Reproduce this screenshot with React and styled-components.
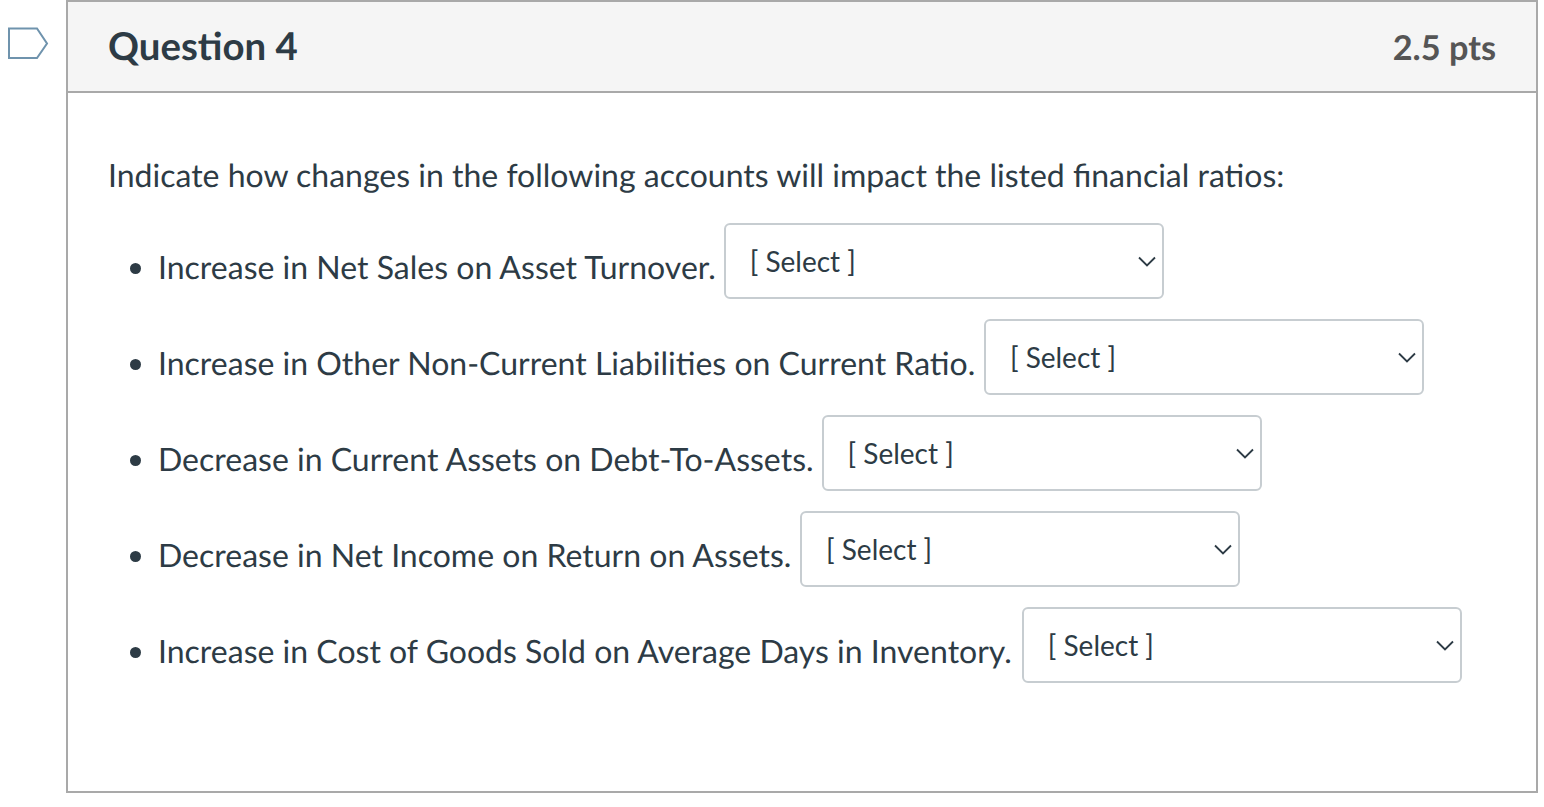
import React from 'react';
import styled, { createGlobalStyle } from 'styled-components';

const GlobalStyle = createGlobalStyle`
    html, body {
        margin: 0;
        padding: 0;
        background: #fff;
    }
    body {
        font-family: Lato, 'Open Sans', Arial, sans-serif;
        color: #2d3b45;
        text-rendering: geometricPrecision;
    }
`;

const Page = styled.div`
    display: flex;
    align-items: flex-start;
    width: 1544px;
    height: 807px;
    overflow: hidden;
`;

const FlagColumn = styled.div`
    width: 66px;
    flex: none;
    padding: 27px 0 0 7px;
    box-sizing: border-box;
`;

const Card = styled.section`
    width: 1472px;
    height: 793px;
    box-sizing: border-box;
    border: 2px solid #a9a9a9;
    display: flex;
    flex-direction: column;
`;

const CardHeader = styled.header`
    height: 91px;
    box-sizing: border-box;
    flex: none;
    background: #f5f5f5;
    border-bottom: 2px solid #a9a9a9;
    display: flex;
    align-items: center;
    justify-content: space-between;
    padding: 0 40px 2px;
`;

const Title = styled.h2`
    margin: 0;
    font-size: 38.4px;
    font-weight: 700;
    color: #2d3b45;
`;

const Points = styled.div`
    font-size: 34.3px;
    font-weight: 700;
    color: #555;
    padding-top: 4px;
`;

const CardBody = styled.div`
    padding: 59px 40px 0;
`;

const Intro = styled.p`
    margin: 0 0 25px;
    font-size: 32px;
    line-height: 46px;
`;

const List = styled.ul`
    margin: 0;
    padding: 0 0 0 50px;
`;

const Item = styled.li`
    font-size: 32px;
    line-height: 40px;
    white-space: nowrap;
`;

const SelectBox = styled.span`
    position: relative;
    display: inline-block;
    width: 440px;
    height: 76px;
    margin: 0 0 20px ${(props) => props.$gap}px;
    vertical-align: middle;
`;

const NativeSelect = styled.select`
    appearance: none;
    width: 100%;
    height: 100%;
    box-sizing: border-box;
    display: block;
    background: #fff;
    border: 2px solid #c7cdd1;
    border-radius: 6px;
    padding: 0 24px;
    font-family: Lato, 'Open Sans', Arial, sans-serif;
    font-size: 28px;
    color: #2d3b45;
`;

const Chevron = styled.svg`
    position: absolute;
    right: 8px;
    top: 33px;
    width: 18px;
    height: 12px;
    pointer-events: none;
`;

const rows = [
    { text: 'Increase in Net Sales on Asset Turnover.', gap: 8 },
    { text: 'Increase in Other Non-Current Liabilities on Current Ratio.', gap: 8.6 },
    { text: 'Decrease in Current Assets on Debt-To-Assets.', gap: 8 },
    { text: 'Decrease in Net Income on Return on Assets.', gap: 8.6 },
    { text: 'Increase in Cost of Goods Sold on Average Days in Inventory.', gap: 10 },
];

export default function App() {
    return (
        <Page>
            <GlobalStyle />
            <FlagColumn>
                <svg width="42" height="33" viewBox="0 0 42 33">
                    <path d="M2 1.5H30L40 16.5L30 31H2Z" fill="#fff" stroke="#6f93ad" strokeWidth="2" />
                </svg>
            </FlagColumn>
            <Card>
                <CardHeader>
                    <Title>Question 4</Title>
                    <Points>2.5 pts</Points>
                </CardHeader>
                <CardBody>
                    <Intro>Indicate how changes in the following accounts will impact the listed financial ratios:</Intro>
                    <List>
                        {rows.map((row) => (
                            <Item key={row.text}>
                                {row.text}
                                <SelectBox $gap={row.gap}>
                                    <NativeSelect defaultValue="select">
                                        <option value="select">[ Select ]</option>
                                    </NativeSelect>
                                    <Chevron viewBox="0 0 18 12">
                                        <path d="M1 1.5L9 9.5L17 1.5" fill="none" stroke="#2d3b45" strokeWidth="1.8" />
                                    </Chevron>
                                </SelectBox>
                            </Item>
                        ))}
                    </List>
                </CardBody>
            </Card>
        </Page>
    );
}
